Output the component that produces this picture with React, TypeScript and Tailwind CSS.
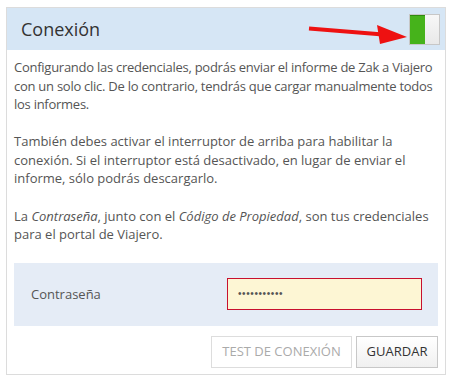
const App = () => {
    return (
        <div className="w-[453px] h-[382px] bg-white pt-[7px] pl-[6px] font-['Open_Sans',sans-serif]">
            <div className="w-[440px] h-[368px] border border-[#dcdcdc] flex flex-col">
                <div className="relative h-[42px] bg-[#d6e6f5] flex items-center justify-between pl-[14px] pr-[5px]">
                    <h2 className="text-[18px] text-[#333] leading-none">Conexión</h2>
                    <svg className="absolute left-[290px] top-[6px]" width="120" height="36" viewBox="0 0 120 36">
                        <line x1="12" y1="14.5" x2="86" y2="20.5" stroke="#ee1111" strokeWidth="4" />
                        <polygon points="80,11 110,23 83,30" fill="#ee1111" />
                    </svg>
                    <div className="w-[31px] h-[31px] flex border border-[#c7c7c7] shadow-[inset_0_1px_1px_rgba(0,0,0,0.15)]">
                        <div className="w-[15px] h-full bg-[#46b31b] border-t border-[#2f8a10]"></div>
                        <div className="flex-1 h-full bg-gradient-to-b from-[#f7f7f7] to-[#e9e9e9]"></div>
                    </div>
                </div>
                <div className="flex-1 px-[7px] pt-[8px] text-[13px] leading-[18.57px] text-[#555]">
                    <p className="tracking-[-0.26px]">Configurando las credenciales, podrás enviar el informe de Zak a Viajero con un solo clic. De lo contrario, tendrás que cargar manualmente todos los informes.</p>
                    <p className="mt-[18.57px]">También debes activar el interruptor de arriba para habilitar la conexión. Si el interruptor está desactivado, en lugar de enviar el informe, sólo podrás descargarlo.</p>
                    <p className="mt-[18.57px]">La <i>Contraseña</i>, junto con el <i>Código de Propiedad</i>, son tus credenciales para el portal de Viajero.</p>
                    <div className="mt-[19px] h-[63px] bg-[#e5ecf6] flex items-center justify-between pl-[17px] pr-[16px]">
                        <span>Contraseña</span>
                        <div className="w-[195px] h-[32px] border border-[#c8102e] bg-[#fdf6d4] flex items-center pl-[10px]">
                            <span className="text-[10px] text-[#555] font-['Liberation_Sans',sans-serif] tracking-[0.6px]">•••••••••••</span>
                        </div>
                    </div>
                    <div className="mt-[10px] flex justify-end gap-[4px]">
                        <button className="w-[141px] h-[32px] border border-[#dddddd] bg-white text-[#aaa] text-[13px]">TEST DE CONEXIÓN</button>
                        <button className="w-[82px] h-[32px] border border-[#c8c8c8] bg-gradient-to-b from-white to-[#f0f0f0] text-[#333] text-[13px]">GUARDAR</button>
                    </div>
                </div>
            </div>
        </div>
    );
}

export default App;
